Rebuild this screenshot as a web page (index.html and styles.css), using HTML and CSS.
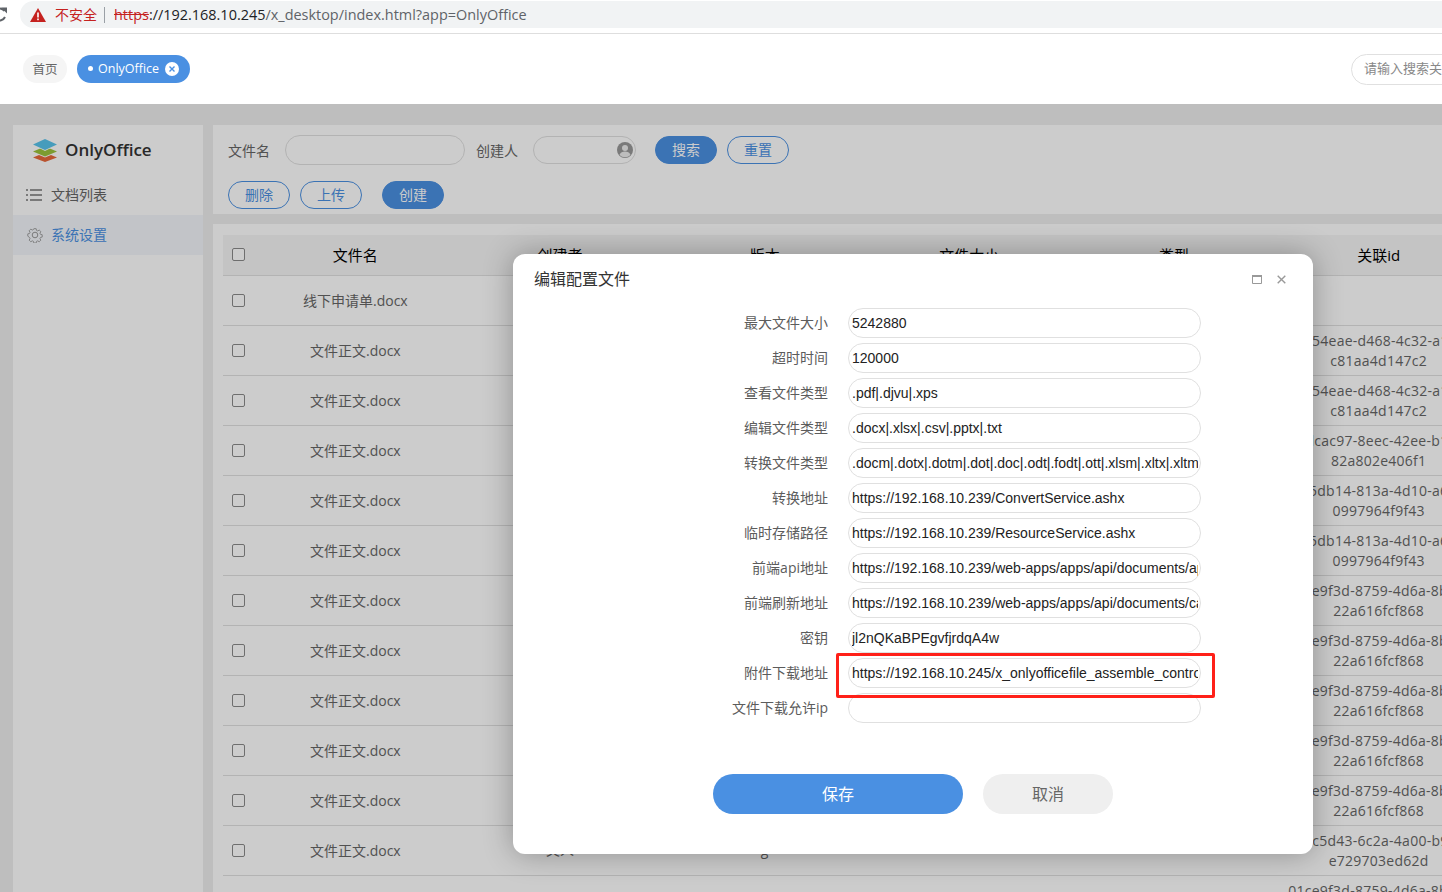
FILE: index.html
```html
<!DOCTYPE html>
<html lang="zh-CN">
<head>
<meta charset="utf-8">
<title>OnlyOffice</title>
<link rel="stylesheet" href="styles.css">
</head>
<body>
<div class="browser-bar">
  <svg class="reload" width="8" height="16" viewBox="0 0 8 16"><path d="M4.500 4A6 6 0 1 0 5 10" fill="none" stroke="#5f6368" stroke-width="2"/><path d="M1 0.500h6v6z" fill="#5f6368"/></svg>
  <div class="omnibox">
    <svg class="warn" width="16" height="14" viewBox="0 0 16 14"><path d="M8 0l8 14H0z" fill="#c5221f"/><rect x="7.200" y="4.500" width="1.600" height="5" fill="#fff"/><rect x="7.200" y="10.500" width="1.600" height="1.700" fill="#fff"/></svg>
    <span class="insecure">不安全</span>
    <span class="omni-sep"></span>
    <span class="url"><s class="url-scheme">https</s><span class="url-host">://192.168.10.245</span>/x_desktop/index.html?app=OnlyOffice</span>
  </div>
</div>

<header class="topbar">
  <a class="tab">首页</a>
  <a class="tab tab-active"><i class="tab-dot"></i>OnlyOffice<svg class="tab-close" width="14" height="14" viewBox="0 0 14 14"><circle cx="7" cy="7" r="7" fill="#fff"/><path d="M4.500 4.500l5 5M9.500 4.500l-5 5" stroke="#4a90e2" stroke-width="1.400"/></svg></a>
  <div class="global-search">请输入搜索关键词</div>
</header>

<main class="workspace">
  <aside class="sidebar">
    <div class="brand">
      <svg width="24" height="23" viewBox="0 0 24 23"><path d="M12 13.500l12 5-12 4.500-12-4.500z" fill="#e8683a"/><path d="M12 8.500l12 5-12 5-12-5z" fill="#fff"/><path d="M12 7.500l12 5-12 5-12-5z" fill="#9cc33c"/><path d="M12 0l12 6-12 6-12-6z" fill="#fff"/><path d="M12 0l12 5.500-12 5.500-12-5.500z" fill="#58c3ec"/></svg>
      <span class="brand-name">OnlyOffice</span>
    </div>
    <nav>
      <a class="menu-item">
        <svg width="16" height="12" viewBox="0 0 16 12"><path d="M0 1h2M4 1h12M0 6h2M4 6h12M0 11h2M4 11h12" stroke="#777" stroke-width="1.500"/></svg>
        <span class="menu-text">文档列表</span>
      </a>
      <a class="menu-item menu-active">
        <svg width="16" height="16" viewBox="0 0 16 16" fill="none" stroke="#999" stroke-width="1"><circle cx="8" cy="8" r="2.800"/><path d="M6.700 1h2.600l.4 1.900 1.300.6 1.700-1 1.800 1.800-1 1.700.6 1.300 1.900.4v2.600l-1.900.4-.6 1.300 1 1.700-1.800 1.800-1.700-1-1.300.6-.4 1.900H6.700l-.4-1.900-1.300-.6-1.700 1-1.800-1.800 1-1.700-.6-1.300L0 9.300V6.700l1.900-.4.6-1.300-1-1.700 1.800-1.800 1.700 1 1.300-.6z" transform="translate(.8 .8) scale(.9)"/></svg>
        <span class="menu-text">系统设置</span>
      </a>
    </nav>
  </aside>

  <div class="content">
    <section class="filters">
      <div class="filter-row">
        <label class="filter-label">文件名</label>
        <div class="field field-name"></div>
        <label class="filter-label filter-label-creator">创建人</label>
        <div class="field field-user">
          <svg width="16" height="16" viewBox="0 0 16 16"><circle cx="8" cy="8" r="8" fill="#999"/><circle cx="8" cy="6" r="3" fill="#eee"/><path d="M2.500 13c1-3 3-3.500 5.500-3.500s4.500.5 5.500 3.500a8 8 0 0 1-11 0z" fill="#eee"/></svg>
        </div>
        <button class="btn btn-fill btn-search">搜索</button>
        <button class="btn btn-line">重置</button>
      </div>
      <div class="filter-row filter-row-actions">
        <button class="btn btn-line">删除</button>
        <button class="btn btn-line">上传</button>
        <button class="btn btn-fill btn-create">创建</button>
      </div>
    </section>

    <section class="table-card">
      <table class="doc-table">
        <thead>
          <tr><th class="col-check"><i class="check"></i></th><th>文件名</th><th>创建者</th><th>版本</th><th>文件大小</th><th>类型</th><th>关联id</th></tr>
        </thead>
        <tbody>
          <tr><td><i class="check"></i></td><td>线下申请单.docx</td><td>文人</td><td>g</td><td></td><td></td><td></td></tr>
          <tr><td><i class="check"></i></td><td>文件正文.docx</td><td>文人</td><td>g</td><td></td><td></td><td>e3d54eae-d468-4c32-a1b2-c81aa4d147c2</td></tr>
          <tr><td><i class="check"></i></td><td>文件正文.docx</td><td>文人</td><td>g</td><td></td><td></td><td>e3d54eae-d468-4c32-a1b2-c81aa4d147c2</td></tr>
          <tr><td><i class="check"></i></td><td>文件正文.docx</td><td>文人</td><td>g</td><td></td><td></td><td>07dcac97-8eec-42ee-b1c4-82a802e406f1</td></tr>
          <tr><td><i class="check"></i></td><td>文件正文.docx</td><td>文人</td><td>g</td><td></td><td></td><td>a2f5db14-813a-4d10-a6e3-0997964f9f43</td></tr>
          <tr><td><i class="check"></i></td><td>文件正文.docx</td><td>文人</td><td>g</td><td></td><td></td><td>a2f5db14-813a-4d10-a6e3-0997964f9f43</td></tr>
          <tr><td><i class="check"></i></td><td>文件正文.docx</td><td>文人</td><td>g</td><td></td><td></td><td>01ce9f3d-8759-4d6a-8b2e-22a616fcf868</td></tr>
          <tr><td><i class="check"></i></td><td>文件正文.docx</td><td>文人</td><td>g</td><td></td><td></td><td>01ce9f3d-8759-4d6a-8b2e-22a616fcf868</td></tr>
          <tr><td><i class="check"></i></td><td>文件正文.docx</td><td>文人</td><td>g</td><td></td><td></td><td>01ce9f3d-8759-4d6a-8b2e-22a616fcf868</td></tr>
          <tr><td><i class="check"></i></td><td>文件正文.docx</td><td>文人</td><td>g</td><td></td><td></td><td>01ce9f3d-8759-4d6a-8b2e-22a616fcf868</td></tr>
          <tr><td><i class="check"></i></td><td>文件正文.docx</td><td>文人</td><td>g</td><td></td><td></td><td>01ce9f3d-8759-4d6a-8b2e-22a616fcf868</td></tr>
          <tr><td><i class="check"></i></td><td>文件正文.docx</td><td>文人</td><td>g</td><td></td><td></td><td>7b1c5d43-6c2a-4a00-b9d7-e729703ed62d</td></tr>
          <tr><td><i class="check"></i></td><td>文件正文.docx</td><td>文人</td><td>g</td><td></td><td></td><td>01ce9f3d-8759-4d6a-8b2e-22a616fcf868</td></tr>
        </tbody>
      </table>
    </section>
  </div>

  <div class="mask"></div>

  <div class="dialog">
    <div class="dialog-head">
      <h2 class="dialog-title">编辑配置文件</h2>
      <div class="dialog-tools">
        <svg width="10" height="9" viewBox="0 0 10 9"><path d="M.5 1.500h9v7h-9z" fill="none" stroke="#999"/><path d="M0 1h10" stroke="#999" stroke-width="2"/></svg>
        <svg width="9" height="9" viewBox="0 0 9 9"><path d="M.7.700l7.600 7.600M8.300.700L.7 8.300" stroke="#999" stroke-width="1.400"/></svg>
      </div>
    </div>
    <form class="config-form">
      <label>最大文件大小</label><input value="5242880">
      <label>超时时间</label><input value="120000">
      <label>查看文件类型</label><input value=".pdf|.djvu|.xps">
      <label>编辑文件类型</label><input value=".docx|.xlsx|.csv|.pptx|.txt">
      <label>转换文件类型</label><input value=".docm|.dotx|.dotm|.dot|.doc|.odt|.fodt|.ott|.xlsm|.xltx|.xltm">
      <label>转换地址</label><input value="https://192.168.10.239/ConvertService.ashx">
      <label>临时存储路径</label><input value="https://192.168.10.239/ResourceService.ashx">
      <label>前端api地址</label><input value="https://192.168.10.239/web-apps/apps/api/documents/api.js">
      <label>前端刷新地址</label><input value="https://192.168.10.239/web-apps/apps/api/documents/cache">
      <label>密钥</label><input value="jl2nQKaBPEgvfjrdqA4w">
      <label>附件下载地址</label><input value="https://192.168.10.245/x_onlyofficefile_assemble_control/jaxrs/file">
      <label>文件下载允许ip</label><input value="">
    </form>
    <div class="dialog-actions">
      <button class="dlg-btn dlg-save">保存</button>
      <button class="dlg-btn dlg-cancel">取消</button>
    </div>
    <div class="callout"></div>
  </div>
</main>
</body>
</html>
```

FILE: styles.css
```css
* { box-sizing: border-box; }
html, body { margin: 0; height: 100%; }
body {
  display: flex;
  flex-direction: column;
  height: 892px;
  overflow: hidden;
  background: #fff;
  font: 14px "Open Sans", "Noto Sans CJK SC", sans-serif;
  color: #666;
}

/* browser chrome */
.browser-bar {
  flex: none;
  height: 34px;
  display: flex;
  padding-bottom: 5px;
  border-bottom: 1px solid #dedede;
}
.reload { flex: none; margin: 7px 12px 0 0; }
.omnibox {
  flex: 1;
  display: flex;
  align-items: center;
  background: #f1f3f4;
  border-radius: 14px 0 0 14px;
  padding-left: 10px;
  margin-top: 1px;
}
.warn { flex: none; }
.insecure { margin: 0 0 0 9px; line-height: 18px; color: #c5221f; font-size: 14px; }
.omni-sep { width: 1px; height: 16px; background: #9aa0a6; margin: 0 9px 0 7px; }
.url { color: #5f6368; font-size: 14.450px; }
.url-scheme { color: #c5221f; }
.url-host { color: #202124; }

/* top tabs */
.topbar {
  flex: none;
  height: 70px;
  display: flex;
  align-items: center;
  gap: 10px;
  padding: 0 0 0 23px;
  overflow: hidden;
}
.tab {
  width: 44px;
  height: 28px;
  display: flex;
  align-items: center;
  justify-content: center;
  padding: 0 0 2px;
  border-radius: 14px;
  background: #f5f5f5;
  font-size: 12.500px;
  color: #666;
}
.tab-active { width: 113px; justify-content: flex-start; padding-left: 11px; background: #4a90e2; color: #fff; }
.tab-dot { width: 5px; height: 5px; border-radius: 50%; background: #fff; margin-right: 5px; }
.tab-close { margin-left: 6px; margin-top: 2px; }
.global-search {
  flex: none;
  width: 200px;
  height: 31px;
  margin: 0 -109px 0 auto;
  padding-left: 12px;
  line-height: 27px;
  border: 1px solid #e0e0e0;
  border-radius: 16px;
  font-size: 13px;
  color: #888;
}

/* workspace */
.workspace {
  flex: 1;
  min-height: 0;
  position: relative;
  display: flex;
  gap: 10px;
  padding: 21px 0 0 13px;
  background: #eee;
  overflow: hidden;
}
.mask { position: absolute; inset: 0; background: rgba(0, 0, 0, .2); }

.sidebar { flex: none; width: 190px; background: #fff; }
.brand { height: 50px; display: flex; align-items: center; gap: 8px; padding-left: 20px; }
.brand-name { margin-bottom: 2px; font-size: 17px; font-weight: 600; color: #333; }
.menu-item { height: 40px; display: flex; align-items: center; gap: 9px; padding-left: 13px; color: #666; }
.menu-text { margin-bottom: 2px; }
.menu-active { background: #f3f6fb; color: #4a90e2; }
.menu-active svg { margin-left: 1px; margin-right: -1px; }

.content { flex: 1; min-width: 0; display: flex; flex-direction: column; gap: 10px; }
.filters { flex: none; height: 89px; padding: 10px 0 0 15px; background: #fff; }
.filter-row { height: 30px; display: flex; align-items: center; }
.filter-row-actions { margin-top: 15px; gap: 10px; }
.filter-label { color: #666; margin-right: 15px; }
.filter-label-creator { margin-left: 11px; }
.field { border: 1px solid #e0e0e0; border-radius: 15px; }
.field-name { width: 180px; height: 30px; }
.field-user { width: 103px; height: 28px; display: flex; align-items: center; justify-content: flex-end; padding-right: 2px; }
.btn {
  width: 62px;
  height: 28px;
  padding: 0 0 2px;
  border-radius: 14px;
  font: inherit;
  border: 1px solid #4a90e2;
  background: #fff;
  color: #4a90e2;
}
.btn-fill { background: #4a90e2; color: #fff; }
.btn-search { margin: 0 10px 0 19px; }
.btn-create { margin-left: 10px; }

.table-card { flex: 1; min-height: 0; padding: 11px 0 0 10px; background: #fff; overflow: hidden; }
.doc-table { table-layout: fixed; width: 1258px; border-collapse: collapse; }
.doc-table th:first-child, .doc-table td:first-child { width: 30px; }
.doc-table th, .doc-table td { padding: 0; text-align: center; border-bottom: 1px solid #e0e0e0; }
.doc-table th { height: 40px; background: #f5f5f5; font-size: 15px; font-weight: 400; color: #000; }
.doc-table td { height: 50px; color: #666; line-height: 20px; }
.doc-table td:first-child, .doc-table th:first-child { line-height: 0; }
.check { display: inline-block; width: 13px; height: 13px; border: 1px solid #8a8a8a; border-radius: 2px; background: #fff; }
.doc-table td:nth-child(2), .doc-table td:last-child { padding-top: 2px; }
.doc-table td:last-child { letter-spacing: .25px; }

/* dialog */
.dialog {
  position: absolute;
  left: 513px;
  top: 150px;
  width: 800px;
  height: 600px;
  background: #fff;
  border-radius: 12px;
  box-shadow: 0 0 30px rgba(0, 0, 0, .3);
}
.dialog-head { height: 54px; display: flex; justify-content: space-between; padding: 13px 27px 0 21px; }
.dialog-title { margin: 0; font-size: 16px; font-weight: 400; line-height: 24px; color: #333; }
.dialog-tools { display: flex; gap: 15px; padding-top: 8px; height: 20px; }
.config-form { display: grid; grid-template-columns: 315px 353px; column-gap: 20px; row-gap: 5px; }
.config-form label { line-height: 30px; text-align: right; color: #5c5c5c; }
.config-form input {
  height: 30px;
  width: 100%;
  padding: 0 2px 0 3px;
  border: 1px solid #e0e0e0;
  border-radius: 15px;
  outline: 0;
  font: 14px "Liberation Sans", sans-serif;
  color: #222;
}
.dialog-actions { display: flex; gap: 20px; margin: 51px 0 0 200px; }
.dlg-btn { height: 40px; padding: 0 0 2px; border: 0; border-radius: 20px; font: 16px "Open Sans", "Noto Sans CJK SC", sans-serif; }
.dlg-save { width: 250px; background: #4a90e2; color: #fff; }
.dlg-cancel { width: 130px; background: #efefef; color: #666; }
.callout {
  position: absolute;
  left: 323px;
  top: 399px;
  width: 379px;
  height: 45px;
  border: 3px solid #ff2018;
  border-radius: 2px;
}
```
